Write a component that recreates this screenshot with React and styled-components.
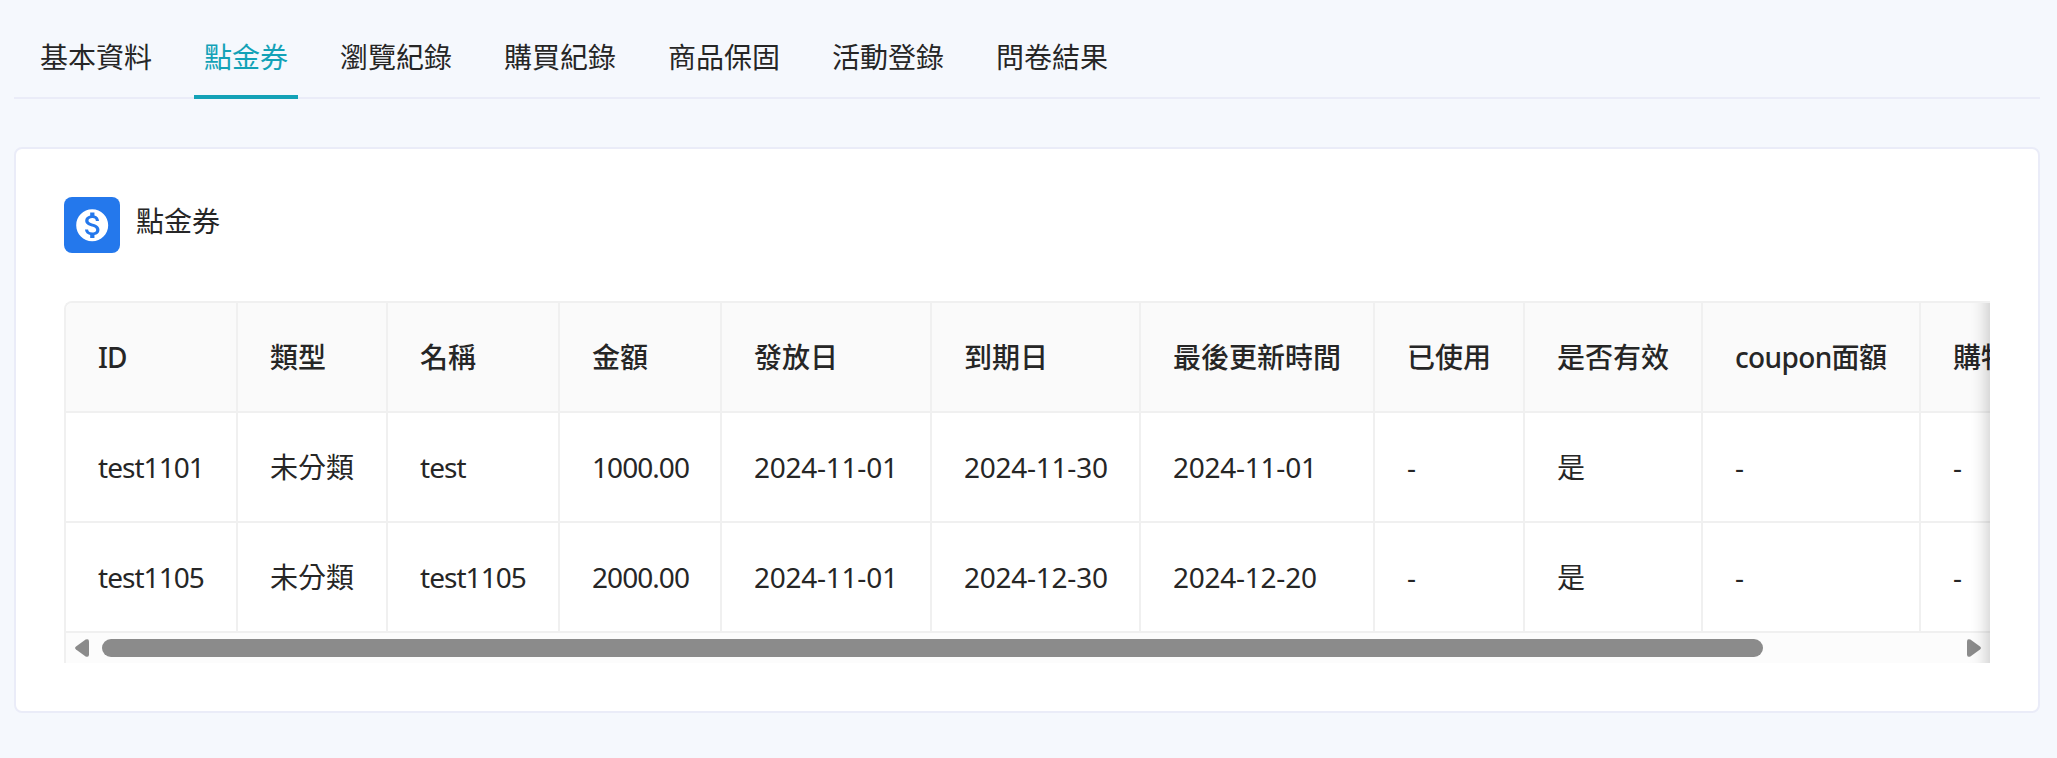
import React, { useState } from "react";
import styled, { createGlobalStyle } from "styled-components";
import { MdMonetizationOn } from "react-icons/md";

const GlobalStyle = createGlobalStyle`
  * {
    box-sizing: border-box;
  }

  body {
    margin: 0;
    background-color: #f5f8fd;
    color: #262626;
    font-family: "Noto Sans", "Noto Sans CJK TC", sans-serif;
    font-size: 28px;
    line-height: 44px;
  }
`;

const Page = styled.div`
  min-height: 758px;
  padding: 15px 17px 0 14px;
`;

const TabNav = styled.nav`
  display: flex;
  gap: 32px;
  height: 84px;
  padding: 0 16px;
  border-bottom: 2px solid #eaecf8;
`;

const Tab = styled.button`
  height: 84px;
  padding: 3px 10px 0;
  border: none;
  border-bottom: 4px solid ${({ $active }) => ($active ? "#13a2b7" : "transparent")};
  background: none;
  color: ${({ $active }) => ($active ? "#13a2b7" : "#262626")};
  font: inherit;
  white-space: nowrap;
  cursor: pointer;
`;

const Card = styled.section`
  height: 566px;
  margin-top: 48px;
  padding: 48px;
  border: 2px solid #eaecf8;
  border-radius: 8px;
  background-color: #ffffff;
`;

const CardHeader = styled.div`
  display: flex;
  gap: 16px;
  height: 56px;
`;

const IconBox = styled.div`
  display: flex;
  align-items: center;
  justify-content: center;
  width: 56px;
  height: 56px;
  border-radius: 8px;
  background-color: #2478ec;
  color: #ffffff;
`;

const CardTitle = styled.h2`
  margin: 2px 0 0;
  font-size: 28px;
  font-weight: 400;
`;

const TableWrap = styled.div`
  position: relative;
  height: 362px;
  margin-top: 48px;
  border-left: 2px solid #f0f0f0;
  border-top: 2px solid #f0f0f0;
  border-top-left-radius: 8px;
  overflow: hidden;

  /* 右側還有內容時的陰影 */
  &::after {
    content: "";
    position: absolute;
    top: -2px;
    right: 0;
    bottom: 0;
    width: 60px;
    box-shadow: inset -20px 0 16px -16px rgba(5, 5, 5, 0.19);
    pointer-events: none;
  }
`;

const Table = styled.table`
  width: 2115px;
  table-layout: fixed;
  border-collapse: separate;
  border-spacing: 0;
  text-align: left;
`;

const Th = styled.th`
  width: ${({ $width }) => $width}px;
  height: 110px;
  padding: 0 0 0 32px;
  border-right: 2px solid #f0f0f0;
  border-bottom: 2px solid #f0f0f0;
  background-color: #fafafa;
  font-weight: 500;
  letter-spacing: ${({ $spacing }) => $spacing};
  white-space: nowrap;
`;

const Td = styled.td`
  height: 110px;
  padding: 0 0 0 32px;
  border-right: 2px solid #f0f0f0;
  border-bottom: 2px solid #f0f0f0;
  letter-spacing: ${({ $spacing }) => $spacing};
  white-space: nowrap;
`;

const ScrollBar = styled.div`
  display: flex;
  align-items: center;
  justify-content: space-between;
  height: 30px;
  padding: 0 9px;
  background-color: #fcfcfc;
`;

const ScrollTrack = styled.div`
  flex: 1;
  margin: 0 13px;
`;

const ScrollThumb = styled.div`
  width: 1661px;
  height: 18px;
  border-radius: 9px;
  background-color: #8b8b8b;
`;

const Arrow = styled.svg`
  display: block;
  width: 14px;
  height: 18px;
  fill: #8b8b8b;
  transform: ${({ $right }) => ($right ? "scaleX(-1)" : "none")};
`;

const tabs = [
  "基本資料",
  "點金券",
  "瀏覽紀錄",
  "購買紀錄",
  "商品保固",
  "活動登錄",
  "問卷結果",
];

const columns = [
  { title: "ID", key: "id", width: 172 },
  { title: "類型", key: "type", width: 150 },
  { title: "名稱", key: "name", width: 172 },
  { title: "金額", key: "amount", width: 162 },
  { title: "發放日", key: "issueDate", width: 210 },
  { title: "到期日", key: "dueDate", width: 209 },
  { title: "最後更新時間", key: "updatedAt", width: 234 },
  { title: "已使用", key: "used", width: 150 },
  { title: "是否有效", key: "valid", width: 178 },
  { title: "coupon面額", key: "couponValue", width: 218 },
  { title: "購物金", key: "credit", width: 260 },
];

const coupons = [
  {
    id: "test1101",
    type: "未分類",
    name: "test",
    amount: "1000.00",
    issueDate: "2024-11-01",
    dueDate: "2024-11-30",
    updatedAt: "2024-11-01",
    valid: "是",
  },
  {
    id: "test1105",
    type: "未分類",
    name: "test1105",
    amount: "2000.00",
    issueDate: "2024-11-01",
    dueDate: "2024-12-30",
    updatedAt: "2024-12-20",
    valid: "是",
  },
];

// 英數字間距縮小，日期幾乎維持原寬
const getSpacing = (text) => {
  if (/^\d{4}-/.test(text)) return "-0.25px";
  if (/^\w/.test(text)) return text.includes("面額") ? "-0.65px" : "-0.95px";
  return "normal";
};

const ScrollArrow = ({ right }) => (
  <Arrow viewBox="0 0 14 18" $right={right}>
    <path d="M1 7.4 L10.6 0.6 Q14 -0.8 14 2.4 V15.6 Q14 18.8 10.6 17.4 L1 10.6 Q-0.8 9 1 7.4 Z" />
  </Arrow>
);

const CouponTable = () => (
  <TableWrap>
    <Table>
      <thead>
        <tr>
          {columns.map((col) => (
            <Th
              key={col.key}
              $width={col.width}
              $spacing={getSpacing(col.title)}
            >
              {col.title}
            </Th>
          ))}
        </tr>
      </thead>
      <tbody>
        {coupons.map((coupon) => (
          <tr key={coupon.id}>
            {columns.map((col) => (
              <Td key={col.key} $spacing={getSpacing(coupon[col.key] || "-")}>
                {coupon[col.key] || "-"}
              </Td>
            ))}
          </tr>
        ))}
      </tbody>
    </Table>
    <ScrollBar>
      <ScrollArrow />
      <ScrollTrack>
        <ScrollThumb />
      </ScrollTrack>
      <ScrollArrow right />
    </ScrollBar>
  </TableWrap>
);

const App = () => {
  const [activeTab, setActiveTab] = useState("點金券");

  return (
    <>
      <GlobalStyle />
      <Page>
        <TabNav>
          {tabs.map((tab) => (
            <Tab
              key={tab}
              $active={tab === activeTab}
              onClick={() => setActiveTab(tab)}
            >
              {tab}
            </Tab>
          ))}
        </TabNav>
        <Card>
          <CardHeader>
            <IconBox>
              <MdMonetizationOn size={38.4} />
            </IconBox>
            <CardTitle>點金券</CardTitle>
          </CardHeader>
          <CouponTable />
        </Card>
      </Page>
    </>
  );
};

export default App;
